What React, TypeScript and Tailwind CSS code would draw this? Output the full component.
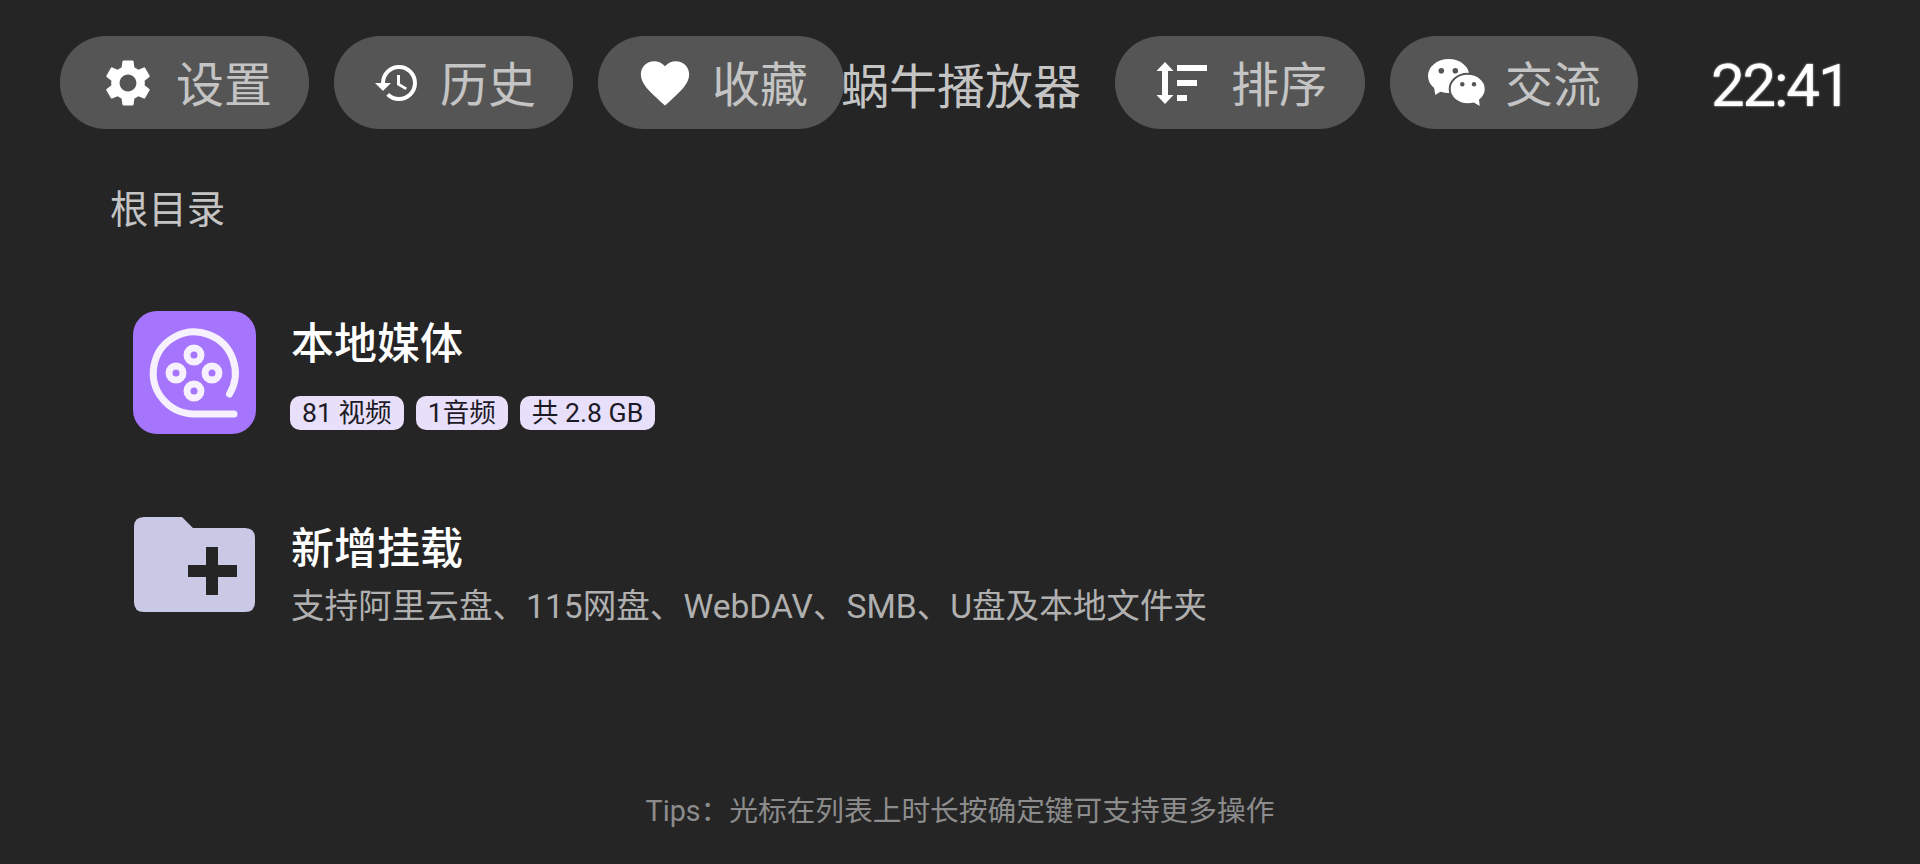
import { MdSettings, MdHistory, MdFavorite } from "react-icons/md";
import type { ReactNode } from "react";

const FONT = "font-['Roboto','Noto_Sans_CJK_SC',sans-serif]";

function SortIcon() {
  return (
    <svg width="53" height="42" viewBox="0 0 53 42" fill="#ffffff" className="shrink-0">
      <path d="M10 0 L18.5 9 H13 V33 H18.5 L10 42 L1.5 33 H7 V9 H1.5 Z" />
      <rect x="22" y="3" width="30" height="6" />
      <rect x="22" y="18" width="20" height="6" />
      <rect x="22" y="33" width="10" height="6" />
    </svg>
  );
}

function WechatIcon() {
  return (
    <svg width="58" height="47" viewBox="0 0 58 47" className="shrink-0">
      <ellipse cx="20.7" cy="17" rx="20.7" ry="17" fill="#ffffff" />
      <path d="M6 28 L7.3 36 L15 31 Z" fill="#ffffff" />
      <ellipse cx="39.7" cy="30" rx="18" ry="15.2" fill="#ffffff" stroke="#555555" strokeWidth="2" />
      <path d="M45 43 L51.7 47 L51 40 Z" fill="#ffffff" />
      <circle cx="13.3" cy="11.7" r="2.8" fill="#555555" />
      <circle cx="27.3" cy="11.7" r="2.8" fill="#555555" />
      <circle cx="34.3" cy="25.3" r="2.2" fill="#555555" />
      <circle cx="46" cy="25.3" r="2.2" fill="#555555" />
    </svg>
  );
}

function FilmIcon() {
  return (
    <div className="w-[123px] h-[123px] rounded-[24px] bg-[#a575fd] flex items-center justify-center shrink-0">
      <svg width="123" height="123" viewBox="0 0 123 123" fill="none" stroke="#f6f0ff" strokeLinecap="round">
        <path d="M96.5 83 A41 41 0 1 0 61 103 H101" strokeWidth="7" />
        <circle cx="61" cy="44" r="7" strokeWidth="7" />
        <circle cx="61" cy="80" r="7" strokeWidth="7" />
        <circle cx="43" cy="62" r="7" strokeWidth="7" />
        <circle cx="79" cy="62" r="7" strokeWidth="7" />
      </svg>
    </div>
  );
}

function FolderIcon() {
  return (
    <svg width="123" height="98" viewBox="0 0 123 98" className="shrink-0 mb-[22px]">
      <path
        d="M11 1 H49 L60 12 H112 Q122 12 122 22 V86 Q122 96 112 96 H11 Q1 96 1 86 V11 Q1 1 11 1 Z"
        fill="#c9c9e6"
      />
      <path d="M73 31 H85 V49 H104 V61 H85 V79 H73 V61 H55 V49 H73 Z" fill="#252525" />
    </svg>
  );
}

function Pill({ icon, label, className }: { icon: ReactNode; label: string; className: string }) {
  return (
    <div className={`${className} h-[93px] rounded-[46px] bg-[#555555] flex items-center shrink-0`}>
      {icon}
      <span className="pt-[7px] text-[48px] leading-none text-[#c4c4c4]">{label}</span>
    </div>
  );
}

function Chip({ children }: { children: ReactNode }) {
  return (
    <span className="h-[34px] px-3 rounded-[10px] bg-[#e8e0fb] text-[#1c1a24] text-[26.6px] leading-[34px] whitespace-nowrap">
      {children}
    </span>
  );
}

export default function App() {
  return (
    <div className={`${FONT} w-[1920px] h-[864px] overflow-hidden bg-[#252525] flex flex-col`}>
      <header className="flex items-center pt-[36px] pl-[60px]">
        <div className="flex gap-[25px]">
          <Pill className="w-[249px] pl-[40px] gap-[20px]" label="设置" icon={<MdSettings size={56} color="#fff" className="shrink-0" />} />
          <Pill className="w-[239px] pl-[39px] gap-[19px]" label="历史" icon={<MdHistory size={48} color="#fff" className="shrink-0" />} />
          <Pill className="w-[246px] pl-[38px] gap-[18px]" label="收藏" icon={<MdFavorite size={58} color="#fff" className="shrink-0" />} />
        </div>
        <h1 className="-ml-[3px] w-[274px] pt-[10px] text-[48px] leading-none font-normal text-[#c4c4c4] whitespace-nowrap">蜗牛播放器</h1>
        <div className="flex gap-[25px]">
          <Pill className="w-[250px] pl-[40px] gap-[23px]" label="排序" icon={<SortIcon />} />
          <Pill className="w-[248px] pl-[38px] gap-[19px]" label="交流" icon={<WechatIcon />} />
        </div>
        <div className="ml-[73px] pt-[7px] text-[60px] leading-none tracking-[-2.2px] text-white [text-shadow:0_0_2px_#ffffff]">22:41</div>
      </header>

      <div className="pl-[110px] mt-[56px] text-[38.4px] leading-[50px] text-[#c4c4c4]">根目录</div>

      <main className="pl-[133px] mt-[76px] flex flex-col">
        <div className="flex items-center gap-[35px]">
          <FilmIcon />
          <div className="flex flex-col pt-[3px]">
            <div className="text-[43px] leading-[52px] font-medium text-white">本地媒体</div>
            <div className="flex gap-3 mt-[26px] -ml-[1px]">
              <Chip>81 视频</Chip>
              <Chip>1音频</Chip>
              <Chip>共 2.8 GB</Chip>
            </div>
          </div>
        </div>

        <div className="flex items-center gap-[35px] mt-[82px]">
          <FolderIcon />
          <div className="flex flex-col">
            <div className="text-[43px] leading-[52px] font-medium text-white">新增挂载</div>
            <div className="text-[33.6px] leading-[44px] mt-[10px] text-[#b0b0b0]">支持阿里云盘、115网盘、WebDAV、SMB、U盘及本地文件夹</div>
          </div>
        </div>
      </main>

      <footer className="mt-auto pb-[35px] text-center text-[28.7px] leading-9 text-[#8c8c8c]">Tips：光标在列表上时长按确定键可支持更多操作</footer>
    </div>
  );
}
